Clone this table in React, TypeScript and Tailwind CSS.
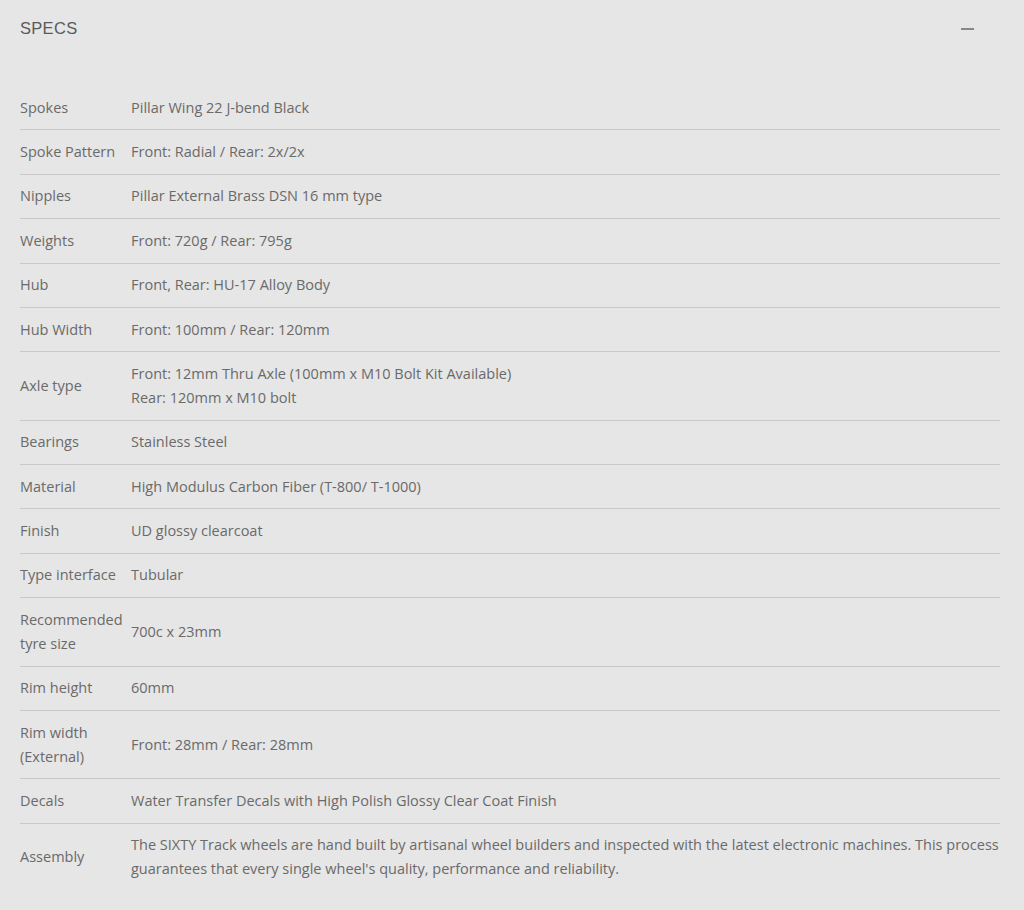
const specs: { label: string; value: string[] }[] = [
  { label: "Spokes", value: ["Pillar Wing 22 J-bend Black"] },
  { label: "Spoke Pattern", value: ["Front: Radial / Rear: 2x/2x"] },
  { label: "Nipples", value: ["Pillar External Brass DSN 16 mm type"] },
  { label: "Weights", value: ["Front: 720g / Rear: 795g"] },
  { label: "Hub", value: ["Front, Rear: HU-17 Alloy Body"] },
  { label: "Hub Width", value: ["Front: 100mm / Rear: 120mm"] },
  {
    label: "Axle type",
    value: [
      "Front: 12mm Thru Axle (100mm x M10 Bolt Kit Available)",
      "Rear: 120mm x M10 bolt",
    ],
  },
  { label: "Bearings", value: ["Stainless Steel"] },
  { label: "Material", value: ["High Modulus Carbon Fiber (T-800/ T-1000)"] },
  { label: "Finish", value: ["UD glossy clearcoat"] },
  { label: "Type interface", value: ["Tubular"] },
  { label: "Recommended tyre size", value: ["700c x 23mm"] },
  { label: "Rim height", value: ["60mm"] },
  { label: "Rim width (External)", value: ["Front: 28mm / Rear: 28mm"] },
  {
    label: "Decals",
    value: ["Water Transfer Decals with High Polish Glossy Clear Coat Finish"],
  },
  {
    label: "Assembly",
    value: [
      "The SIXTY Track wheels are hand built by artisanal wheel builders and inspected with the latest electronic machines. This process guarantees that every single wheel's quality, performance and reliability.",
    ],
  },
];

export default function App() {
  return (
    <div className="min-h-[910px] w-[1024px] bg-[#e6e6e6] px-5 font-['Open_Sans','Noto_Sans',sans-serif] text-[#6a6a6a]">
      <div className="flex h-[56px] items-center justify-between">
        <h2 className="font-['Liberation_Sans',Arial,sans-serif] text-[16.5px] tracking-[0.3px] text-[#5a5a5a]">
          SPECS
        </h2>
        <span className="mr-[30px] mt-[2px] block h-[2px] w-[13px] bg-[#888888]" />
      </div>
      <div className="mt-[30px] w-[980px]">
        {specs.map((s, i) => (
          <div
            key={s.label}
            className={`grid grid-cols-[111px_1fr] items-center py-[9.7px] text-[14.5px] leading-[24px] ${
              i < specs.length - 1 ? "border-b border-[#c9c9c9]" : ""
            }`}
          >
            <div className="pr-1">{s.label}</div>
            <div>
              {s.value.map((v) => (
                <div key={v}>{v}</div>
              ))}
            </div>
          </div>
        ))}
      </div>
    </div>
  );
}
